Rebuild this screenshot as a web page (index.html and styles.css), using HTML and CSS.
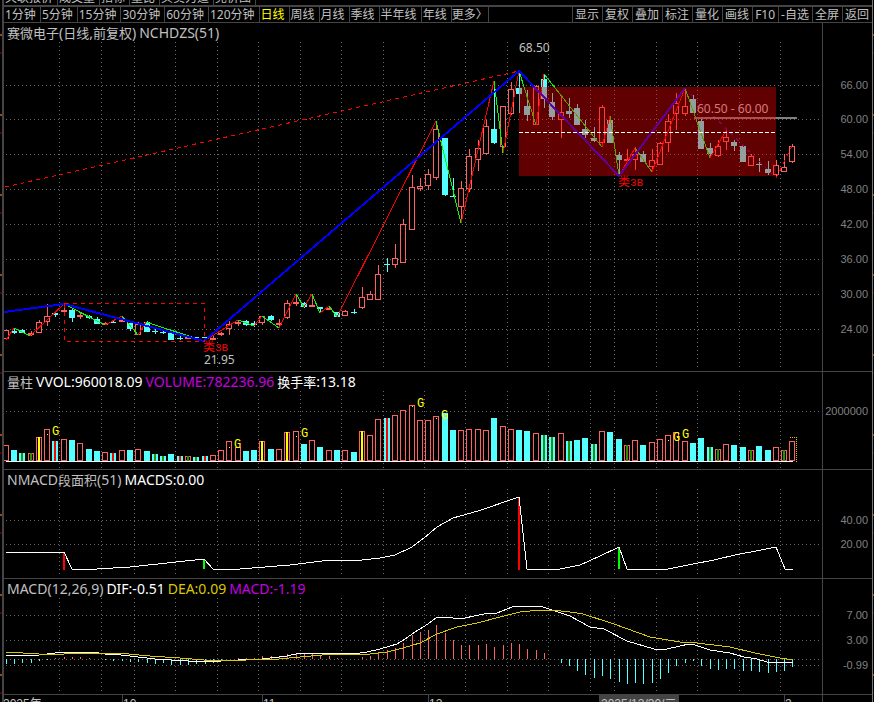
FILE: index.html
```html
<!DOCTYPE html>
<html lang="zh-CN">
<head>
<meta charset="utf-8">
<title>赛微电子 日线</title>
<link rel="stylesheet" href="styles.css">
</head>
<body>
<main class="frame">
  <nav class="tabs" aria-label="功能">
    <button>关联报价</button><button>成交量</button><button>指标</button><button>量比</button><button>买卖力道</button><button>竞价图</button>
  </nav>
  <nav class="toolbar" aria-label="周期">
    <div class="group">
      <button>1分钟</button><button>5分钟</button><button>15分钟</button><button>30分钟</button><button>60分钟</button><button>120分钟</button><button class="active">日线</button><button>周线</button><button>月线</button><button>季线</button><button>半年线</button><button>年线</button><button class="more">更多〉</button>
    </div>
    <div class="group tools">
      <button>显示</button><button>复权</button><button>叠加</button><button>标注</button><button>量化</button><button>画线</button><button>F10</button><button>-自选</button><button>全屏</button><button>返回</button>
    </div>
  </nav>
  <section class="panel">
    <h1 class="title"><span><b>赛微电子</b>(<b>日线</b>,<b>前复权</b>)</span><span>NCHDZS(51)</span></h1>
    <svg id="price" viewBox="4 23 868 348"></svg>
  </section>
  <section class="panel">
    <h2 class="title"><span><b>量柱</b></span><span class="white">VVOL:960018.09</span><span class="magenta">VOLUME:782236.96</span><span class="white"><b>换手率</b>:13.18</span></h2>
    <svg id="volume" viewBox="4 372 868 97"></svg>
  </section>
  <section class="panel">
    <h2 class="title"><span>NMACD<b>段面积</b>(51)</span><span class="white">MACDS:0.00</span></h2>
    <svg id="area" viewBox="4 470 868 108"></svg>
  </section>
  <section class="panel">
    <h2 class="title"><span>MACD(12,26,9)</span><span class="white">DIF:-0.51</span><span class="yellow">DEA:0.09</span><span class="magenta">MACD:-1.19</span></h2>
    <svg id="macd" viewBox="4 579 868 115"></svg>
  </section>
  <svg id="dates" viewBox="4 695 868 7"></svg>
</main>
<script src="chart.js"></script>
</body>
</html>
```
FILE: styles.css
```css
* { box-sizing: border-box; }
body {
  margin: 0;
  overflow: hidden;
  color: #c0c0c0;
  font-family: "Noto Sans", "Noto Sans CJK SC", sans-serif;
  background: repeating-linear-gradient(#000 0 34px, #a04800 34px 36px, #000 36px 52px, #500 52px 54px, #000 54px 80px);
}
.frame {
  margin: 0 1px 0 2px;
  border-left: 2px solid #444;
  border-right: 1px solid #777;
  background: #000;
}
button {
  margin: 0;
  padding: 0 4px 0 1px;
  border: 0;
  border-right: 1px solid #444;
  background: none;
  color: inherit;
  font: 12px/15px "Noto Sans", "Noto Sans CJK SC", sans-serif;
  white-space: nowrap;
}
.tabs {
  display: flex;
  align-items: flex-end;
  height: 7px;
  overflow: hidden;
  border-bottom: 2px solid #444;
}
.toolbar {
  display: flex;
  justify-content: space-between;
  height: 16px;
  border-bottom: 1px solid #444;
}
.group { display: flex; }
.tools button { padding: 0 3px 0 2px; border-right: 0; border-left: 1px solid #444; }
.toolbar .active { color: #ff0; }
.toolbar .more { padding: 0; }
.panel { display: grid; border-bottom: 1px solid #444; }
.title, .panel svg { grid-area: 1 / 1; }
.title {
  display: flex;
  gap: 3px;
  align-self: start;
  margin: 0;
  padding-left: 3px;
  font-size: 14px;
  font-weight: 400;
  line-height: 20px;
  white-space: nowrap;
}
.title b { font-size: 13px; font-weight: 400; }
.white { color: #fff; }
.magenta { color: #c800e0; }
.yellow { color: #dcc800; }
svg { display: block; width: 100%; fill: none; }
rect, line, polyline, path { shape-rendering: crispEdges; }
.grid { stroke: #686868; stroke-dasharray: 1 3; }
.axis { stroke: #444; }
.scale { fill: #808080; font: 11px "Liberation Sans", sans-serif; text-anchor: end; }
.value { fill: #c0c0c0; font-size: 12px; }
.up { stroke: #ff6060; fill: #000; }
.up-line { stroke: #ff6060; }
.down { fill: #54ffff; }
.down-line { stroke: #54ffff; }
.red { stroke: #f00; }
.green { stroke: #0f0; }
.blue { stroke: #00f; stroke-width: 2; }
.purple { stroke: #40b; stroke-dasharray: 3 5; }
.dash { stroke: #f00; stroke-dasharray: 4 4; }
.zone { fill: #f00; fill-opacity: .38; }
.mid { stroke: #fff; stroke-dasharray: 4 2; }
.level { stroke: #808080; stroke-width: 2; }
.signal { fill: #f00; font-size: 12px; }
.signal tspan { font: 11px "Liberation Mono", monospace; }
.mark { fill: #ff0; font: 12px "Liberation Mono", monospace; }
.base { stroke: #fff; }
.dea { stroke: #dcc800; }
.pending { stroke: #dcc800; stroke-dasharray: 1 1; }
.core-y { fill: #ff0; }
.core-g { fill: #289000; }
.core-r { fill: #f00; }
.cursor { fill: #444; }
.date { fill: #c0c0c0; font: 12px "Liberation Sans", "Noto Sans CJK SC", sans-serif; }
```
FILE: chart.js
```js
const SLOT = 8.28;
const xAt = i => Math.round(5.8 + SLOT * i);
const columns = [59, 101, 134, 175, 217, 258, 300, 341, 383, 424, 465, 507, 548, 590, 614, 656, 697, 739, 780];

const line = (x1, y1, x2, y2, c) => `<line class="${c}" x1="${x1}" y1="${y1}" x2="${x2}" y2="${y2}"/>`;
const rect = (x, y, w, h, c) => `<rect class="${c}" x="${x}" y="${y}" width="${w}" height="${h}"/>`;
const poly = (pts, c) => `<polyline class="${c}" points="${pts}"/>`;
const text = (x, y, s, c) => `<text class="${c}" x="${x}" y="${y}">${s}</text>`;
const hollow = (x, y, h) => rect(x - 2.5, y + .5, 5, Math.max(h - 1, 1), 'up');

function grid(top, bottom, rows) {
  let s = columns.map(x => line(x + .5, top, x + .5, bottom, 'grid')).join('');
  for (const [y, label] of rows) {
    s += line(6, y + .5, 820, y + .5, 'grid');
    if (label) s += text(868, y + 4, label, 'scale');
  }
  return s;
}
const axis = (top, bottom) => line(822.5, top, 822.5, bottom, 'axis');
const put = (id, s) => { document.getElementById(id).innerHTML = s; };

/* direction, high, body top, body bottom, low */
const candles = `u 330 330 339 340|d 328 331 333 334|d 329 330 333 333|u 331 333 334 336|u 320 322 333 333|u 304 316 322 326|d 311 313 315 317|u 304 310 312 312|d 308 310 318 322|u 312 315 317 319|d 315 316 318 319|d 317 319 324 324|u 322 323 325 325|d 320 322 323 323|u 317 320 322 322|d 321 323 329 331|u 322 324 335 335|d 321 322 332 332|d 329 331 332 334|d 330 332 333 334|d 332 333 340 340|d 336 338 339 340|u 336 337 338 338|d 337 337 338 338|d 337 337 338 341|u 336 338 339 340|u 332 333 335 336|u 321 324 329 335|u 320 322 324 326|d 320 321 325 326|d 321 323 325 327|u 316 316 323 325|d 315 316 320 321|u 319 323 324 328|u 300 303 318 319|u 295 302 304 306|d 302 303 307 308|u 295 305 306 306|d 307 307 309 313|u 306 308 310 310|d 312 312 317 317|u 310 311 316 316|d 309 312 313 314|u 287 297 308 309|u 291 294 300 300|u 265 274 300 300|d 258 264 265 272|u 244 258 265 268|u 219 224 263 263|u 175 187 230 230|u 178 186 189 191|u 169 174 186 190|u 121 129 178 180|d 138 138 195 196|d 178 196 197 197|u 181 188 207 223|u 149 156 189 192|u 140 148 160 171|u 120 126 154 155|d 81 129 143 144|u 106 106 147 153|u 82 89 114 115|d 71 88 94 113|d 90 106 115 121|u 85 86 125 125|d 74 79 99 108|d 93 102 117 120|u 96 112 120 138|d 98 111 114 118|d 104 108 125 125|d 120 129 135 138|d 127 138 141 142|u 105 107 143 147|d 116 120 143 143|d 152 155 160 176|u 149 159 160 160|u 147 154 160 170|d 151 154 162 162|u 149 160 167 172|u 142 143 165 165|u 114 121 143 152|u 93 103 114 130|u 89 106 114 116|d 95 99 113 113|d 119 121 149 149|d 143 148 154 158|u 140 146 156 157|u 129 137 142 150|d 140 142 146 151|d 146 146 162 162|u 154 156 166 166|d 158 164 165 172|d 161 169 173 175|u 160 165 175 178|u 154 167 172 172|u 144 146 162 163`.split('|');

function drawCandle(row, i) {
  const [dir, ...n] = row.split(' ');
  const [hi, top, bot, lo] = n.map(Number);
  const x = xAt(i);
  const wick = line(x + .5, hi, x + .5, lo, dir === 'u' ? 'up-line' : 'down-line');
  return wick + (dir === 'u' ? hollow(x, top, bot - top) : rect(x - 3, top, 6, bot - top, 'down'));
}

const strokes = [[6,340],[14,328],[30,336],[64,304],[105,325],[122,316],[138,335],[146,322],[204,341],[238,320],[254,326],[262,316],[279,328],[296,294],[304,307],[312,294],[320,313],[329,306],[337,317],[436,121],[461,223],[494,81],[503,153],[519,71],[536,125],[544,74],[602,147],[610,116],[619,176],[635,148],[652,172],[685,88],[710,158],[727,129]];

put('price',
  grid(42, 368, [[85,'66.00'],[119,'60.00'],[154,'54.00'],[189,'48.00'],[224,'42.00'],[259,'36.00'],[294,'30.00'],[329,'24.00']]) +
  candles.map(drawCandle).join('') +
  strokes.slice(1).map((p, i) => line(...strokes[i], ...p, i % 2 ? 'green' : 'red')).join('') +
  poly('4,312 64,304 204,341 519,71 619,176 685,88', 'blue') +
  poly('685,88 776,178', 'purple') +
  poly('776,178 793,144', 'dash') +
  poly('5,187 519,71', 'dash') +
  `<path class="dash" d="M64.5 303.5H204.5V341.5H64.5Z"/>` +
  line(694, 118, 797, 118, 'level') +
  text(697, 113, '60.50 - 60.00', 'value') +
  rect(519, 87, 257, 89, 'zone') +
  line(519, 132.5, 776, 132.5, 'mid') +
  text(519, 52, '68.50', 'value') +
  text(204, 364, '21.95', 'value') +
  text(203, 351, '类<tspan>3B</tspan>', 'signal') +
  text(618, 186, '类<tspan>3B</tspan>', 'signal') +
  axis(23, 371));

/* direction, optional core colour, top of bar */
const volumes = 'u445 d450 dg453 ug453 uy437 u429 dr441 u439 d440 u443 d449 d451 u452 dr453 u450 d450 u449 d451 dg454 dg456 d454 dr456 ug456 dg457 dr456 u455 u450 u441 u447 d451 d450 uy441 d449 u449 uy432 u431 d444 u440 d447 u450 d450 u450 d452 uy431 u435 u419 dr418 u415 u410 u405 u420 u420 u416 d413 d430 u430 u429 u429 u430 d418 u426 u429 d430 d431 u433 dg435 dg437 u433 dg441 d440 d438 dg444 u431 d432 d439 ug445 u440 d445 u442 u439 u435 u432 u441 d443 d438 dg447 ug449 u444 d445 d447 ug450 d446 d450 u447 ug450 u441'.split(' ');

function drawVolume(v, i) {
  const [, dir, core, y] = v.match(/^(.)([a-z]?)(\d+)$/);
  const x = xAt(i), top = Number(y);
  return (dir === 'u' ? hollow(x, top, 461 - top) : rect(x - 3, top, 6, 461 - top, 'down')) +
    (core ? rect(x - 1, top, 2, 461 - top, 'core-' + core) : '');
}

put('volume',
  grid(391, 468, [[411, '2000000']]) +
  volumes.map(drawVolume).join('') +
  line(6, 461.5, 793, 461.5, 'base') +
  `<path class="pending" d="M790 437.5H796.5V462"/>` +
  [[52,435],[234,448],[301,437],[417,407],[441,419],[673,441],[682,438]].map(([x, y]) => text(x, y, 'G', 'mark') + rect(x - 5, y - 1, 1, 1, 'core-y')).join('') +
  axis(372, 469));

put('area',
  grid(489, 576, [[520, '40.00'], [544, '20.00']]) +
  rect(63, 552, 2, 18, 'core-r') + rect(518, 497, 2, 73, 'core-r') +
  `<path stroke="#0f0" stroke-width="2" d="M204 559V569M619 547V569"/>` +
  poly('6,552 64,552 72,569 97,569 130,567 204,559 213,569 240,569 290,565 330,560 362,560 380,558 395,555 412,547 424,538 437,527 453,518 478,511 519,497 527,569 560,569 580,565 600,556 619,547 627,569 668,569 693,564 714,560 735,555 756,551 776,547 785,569 793,569', 'base') +
  axis(470, 578));

const histogram = [-5,-5,-4,-4,-2,-1,1,2,2,2,1,0,-1,-2,-2,-3,-3,-4,-5,-4,-6,-6,-6,-5,-5,-4,-2,0,1,1,1,3,3,2,5,6,6,5,4,3,1,0,0,2,3,6,9,11,16,24,27,29,34,26,19,14,14,14,15,12,14,16,15,10,9,6,0,-4,-7,-12,-16,-19,-17,-20,-23,-25,-24,-25,-24,-20,-14,-7,-4,-2,-7,-10,-11,-10,-10,-12,-12,-13,-14,-13,-12,-8];

put('macd',
  grid(598, 692, [[615, '7.00'], [640, '3.00'], [659, ''], [665, '-0.99']]) +
  histogram.map((v, i) => v ? line(xAt(i) + .5, 659, xAt(i) + .5, 659 - v, v > 0 ? 'up-line' : 'down-line') : '').join('') +
  poly('6,655 14,655 30,656 39,655 55,653 64,652 92,652 105,654 121,655 138,657 155,659 171,660 204,662 221,661 238,660 262,659 287,656 300,653 333,653 354,654 367,652 380,649 397,644 405,639 415,632 428,624 437,617 445,617 460,619 484,614 497,613 512,607 519,606 530,607 540,606 549,609 570,616 590,627 604,629 627,641 654,649 667,649 689,644 695,645 710,650 730,653 744,657 757,659 767,662 784,663 793,662', 'base') +
  poly('6,652 39,654 64,654 80,653 118,653 150,656 180,658 204,660 221,661 246,660 279,659 300,657 333,654 370,654 387,652 403,648 420,643 437,634 457,627 477,623 500,617 520,612 540,610 552,610 570,612 583,614 614,624 650,637 680,642 697,643 730,647 755,653 780,658 793,660', 'dea') +
  axis(579, 694));

put('dates',
  rect(599, 695, 80, 7, 'cursor') +
  [122, 262, 428, 784].map(x => line(x + .5, 695, x + .5, 702, 'axis')).join('') +
  [[3,'2025年'],[123,'10'],[263,'11'],[429,'12'],[601,'2025/12/30/二'],[785,'2']].map(([x, s]) => text(x, 708, s, 'date')).join('') +
  axis(695, 702));
```
